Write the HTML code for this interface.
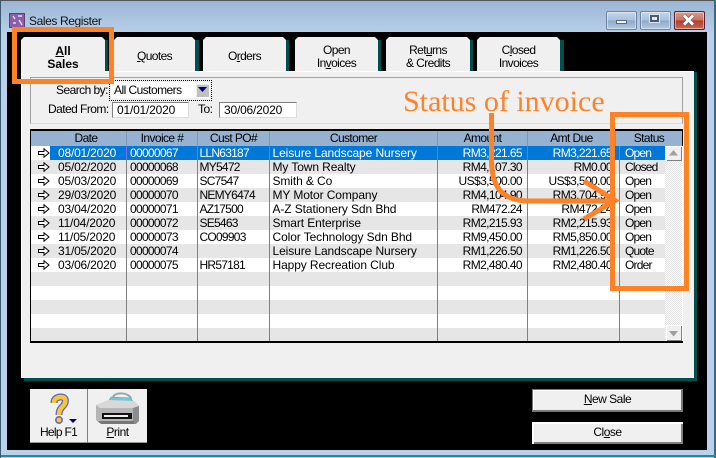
<!DOCTYPE html>
<html><head><meta charset="utf-8"><style>
html,body{margin:0;padding:0;background:#fff}
#w{position:relative;width:716px;height:458px;overflow:hidden;background:#b9d1ea;font-family:"Liberation Sans",sans-serif;font-size:12px;color:#000}
#w div,#w span.a,#w svg{position:absolute}
.t{white-space:nowrap;line-height:13px;letter-spacing:-.55px}
.tab{background:#f0f0f0;top:37px;height:34px;clip-path:polygon(3px 0,calc(100% - 3px) 0,100% 3px,100% 100%,0 100%,0 3px);text-align:center;line-height:13px;font-size:12px;letter-spacing:-.6px}
.ts{top:40px;height:31px;width:3px;background:#004f4f}
.tab p{margin:0;padding-top:7px}
.r{left:31px;width:635px;height:14px;line-height:14px;white-space:nowrap}
.r span{position:absolute;top:0}
.d{left:27px;letter-spacing:-.2px}.i{left:99px;letter-spacing:-.7px}.p{left:168.5px;letter-spacing:-.75px}.c{left:241.5px;letter-spacing:-.1px}
.m{right:144px;letter-spacing:-.6px}.u{right:54px;letter-spacing:-.6px}.s{left:594px;letter-spacing:-.8px}
.ar{left:7px;width:12px;height:10px;top:2px}
.g{background:#e6e6e6}
.v{width:1px;background:#808080;top:146px;height:195px}
.h{top:131px;height:14px;line-height:14px;text-align:center;letter-spacing:-.6px}
.btn{background:#f0f0f0;box-shadow:inset 2px 2px 0 #fff,inset -2px -2px 0 #808080;text-align:center;line-height:21px;font-size:12px;letter-spacing:-.5px}
.win{top:11px;height:17px;border:1px solid #6f83a0;border-radius:2px;background:linear-gradient(#c3d6ea 0,#a9c1dc 48%,#8ea9c9 52%,#b2c9e2 100%);box-shadow:inset 0 0 0 1px rgba(255,255,255,.45)}
.inp{background:#fff;border-top:1px solid #808080;border-left:1px solid #808080;border-right:1px solid #ddd;border-bottom:1px solid #ddd;line-height:14px;height:14px;letter-spacing:-.2px;padding-left:4px;box-sizing:content-box}
.or{border:5px solid #ff8227;box-sizing:border-box}
</style></head><body><div id="w">
<div style="left:0;top:0;width:716px;height:34px;background:linear-gradient(#9ab5d3,#b8d0ea)"></div>
<div style="left:0;top:0;width:716px;height:1px;background:#555"></div>
<div style="left:714px;top:0;width:2px;height:458px;background:#3a6a80"></div>
<div style="left:0;top:455px;width:716px;height:2px;background:#1f8a99"></div>
<div style="left:0;top:0;width:1px;height:458px;background:#3a5a70"></div>

<svg style="left:9px;top:13px" width="16" height="15" viewBox="0 0 16 15"><rect x=".5" y=".5" width="15" height="14" fill="#8a5fa8" stroke="#5d4070"/><path d="M4 3l2 3M9 3h4M4 10h3M10 7l3 5" stroke="#e8d8f0" stroke-width="1.4" fill="none"/></svg>
<div class="t" style="left:29px;top:14.500px;color:#111;letter-spacing:-.4px">Sales Register</div>

<div class="win" style="left:606px;width:29px"></div>
<div style="left:616px;top:20px;width:9px;height:2px;background:#eef2f7;border:1px solid #5a6a80"></div>
<div class="win" style="left:640px;width:29px"></div>
<div style="left:650px;top:15px;width:5px;height:3px;border:2px solid #4a5a70;background:#dfe8f2;outline:1px solid #dde6f0"></div>
<div class="win" style="left:674px;width:29px;border-color:#5a2030;background:linear-gradient(#dd9c8f 0,#c9705f 48%,#b43a28 52%,#c96a55 100%)"></div>
<svg style="left:681px;top:14px" width="16" height="12" viewBox="0 0 16 12"><path d="M3 1.500l9 9M12 1.500l-9 9" stroke="#666" stroke-width="4.400"/><path d="M3 1.500l9 9M12 1.500l-9 9" stroke="#fff" stroke-width="2.800"/></svg>

<div style="left:7px;top:32px;width:700px;height:418px;background:#000"></div>

<div class="ts" style="left:105px"></div><div class="ts" style="left:195px;width:4px"></div><div class="ts" style="left:286px"></div><div class="ts" style="left:378px"></div><div class="ts" style="left:470px"></div><div class="ts" style="left:560px;width:4px"></div>
<div class="tab" style="left:21px;width:84px;height:40px;font-weight:bold;letter-spacing:0"><p style="padding-top:8px"><u>A</u>ll<br>Sales</p></div>
<div class="tab" style="left:114px;width:81px"><p style="padding-top:13px"><u>Q</u>uotes</p></div>
<div class="tab" style="left:203px;width:83px"><p style="padding-top:13px">O<u>r</u>ders</p></div>
<div class="tab" style="left:295px;width:83px"><p>Open<br>In<u>v</u>oices</p></div>
<div class="tab" style="left:386px;width:84px"><p>Ret<u>u</u>rns<br>&amp; Credits</p></div>
<div class="tab" style="left:477px;width:83px"><p>C<u>l</u>osed<br>Invoices</p></div>

<div style="left:21px;top:71px;width:673px;height:307px;background:#f0f0f0;border-left:1px solid #fff;border-top:1px solid #fff;box-sizing:border-box"></div>
<div style="left:21px;top:71px;width:84px;height:6px;background:#f0f0f0"></div>
<div style="left:694px;top:72px;width:3px;height:309px;background:#004f4f"></div>
<div style="left:24px;top:378px;width:673px;height:3px;background:#004f4f"></div>

<div style="left:30px;top:77px;width:653px;height:47px;border:1px solid #a0a0a0;border-bottom:1px solid #ddd;box-sizing:border-box"></div>

<div class="t" style="left:56px;top:84px">Search by:</div>
<div style="left:109px;top:80px;width:103px;height:21px;border:1px dotted #000;box-sizing:border-box"></div>
<div style="left:111px;top:82px;width:99px;height:16px;background:#fff"></div>
<div class="t" style="left:114px;top:84px">All Customers</div>
<div style="left:196px;top:84px;width:13px;height:13px;background:#c0c0c0;border-top:1px solid #eee;border-left:1px solid #eee;box-sizing:border-box"></div>
<svg style="left:198px;top:87px" width="10" height="6"><path d="M0 0h9l-4.500 5z" fill="#000080"/></svg>
<div class="t" style="left:48px;top:103px">Dated From:</div>
<div class="inp t" style="left:112px;top:102px;width:71px">01/01/2020</div>
<div class="t" style="left:198px;top:103px">To:</div>
<div class="inp t" style="left:219px;top:102px;width:72px">30/06/2020</div>

<div style="left:30px;top:129px;width:653px;height:214px;background:#fff"></div>
<div class="g" style="left:31px;top:160px;width:635px;height:14px"></div>
<div class="g" style="left:31px;top:188px;width:635px;height:14px"></div>
<div class="g" style="left:31px;top:216px;width:635px;height:14px"></div>
<div class="g" style="left:31px;top:244px;width:635px;height:14px"></div>
<div class="g" style="left:31px;top:272px;width:635px;height:14px"></div>
<div class="g" style="left:31px;top:300px;width:635px;height:14px"></div>
<div class="g" style="left:31px;top:328px;width:635px;height:13px"></div>
<div style="left:50px;top:146px;width:615px;height:14px;background:#0078d7"></div>

<div class="v" style="left:126px"></div><div class="v" style="left:197px"></div><div class="v" style="left:269px"></div><div class="v" style="left:437px"></div><div class="v" style="left:527px"></div><div class="v" style="left:619px"></div>
<div style="left:126px;top:146px;width:1px;height:14px;background:#7a6cf0"></div><div style="left:197px;top:146px;width:1px;height:14px;background:#7a6cf0"></div><div style="left:269px;top:146px;width:1px;height:14px;background:#7a6cf0"></div><div style="left:437px;top:146px;width:1px;height:14px;background:#7a6cf0"></div><div style="left:527px;top:146px;width:1px;height:14px;background:#7a6cf0"></div><div style="left:619px;top:146px;width:1px;height:14px;background:#7a6cf0"></div>

<div style="left:31px;top:130px;width:651px;height:16px;background:#97b1d0"></div>
<div style="left:126px;top:130px;width:1px;height:16px;background:#7f97b6"></div><div style="left:197px;top:130px;width:1px;height:16px;background:#7f97b6"></div><div style="left:269px;top:130px;width:1px;height:16px;background:#7f97b6"></div><div style="left:437px;top:130px;width:1px;height:16px;background:#7f97b6"></div><div style="left:527px;top:130px;width:1px;height:16px;background:#7f97b6"></div><div style="left:615px;top:130px;width:1px;height:16px;background:#7f97b6"></div>
<div class="h" style="left:50px;width:72px">Date</div>
<div class="h" style="left:127px;width:70px">Invoice #</div>
<div class="h" style="left:198px;width:71px">Cust PO#</div>
<div class="h" style="left:270px;width:167px">Customer</div>
<div class="h" style="left:438px;width:89px">Amount</div>
<div class="h" style="left:528px;width:87px">Amt Due</div>
<div class="h" style="left:616px;width:66px">Status</div>

<div class="r" style="top:146px;color:#fff"><svg class="ar" viewBox="0 0 12 10"><path d="M.5 3.500h5.500V.8L11 5 6 9.200V6.500H.5z" fill="#fff" stroke="#000"/></svg><span class="d">08/01/2020</span><span class="i">00000067</span><span class="p">LLN63187</span><span class="c">Leisure Landscape Nursery</span><span class="m">RM3,221.65</span><span class="u">RM3,221.65</span><span class="s">Open</span></div>
<div class="r" style="top:160px"><svg class="ar" viewBox="0 0 12 10"><path d="M.5 3.500h5.500V.8L11 5 6 9.200V6.500H.5z" fill="#fff" stroke="#000"/></svg><span class="d">05/02/2020</span><span class="i">00000068</span><span class="p">MY5472</span><span class="c">My Town Realty</span><span class="m">RM4,107.30</span><span class="u">RM0.00</span><span class="s">Closed</span></div>
<div class="r" style="top:174px"><svg class="ar" viewBox="0 0 12 10"><path d="M.5 3.500h5.500V.8L11 5 6 9.200V6.500H.5z" fill="#fff" stroke="#000"/></svg><span class="d">05/03/2020</span><span class="i">00000069</span><span class="p">SC7547</span><span class="c">Smith &amp; Co</span><span class="m">US$3,500.00</span><span class="u">US$3,500.00</span><span class="s">Open</span></div>
<div class="r" style="top:188px"><svg class="ar" viewBox="0 0 12 10"><path d="M.5 3.500h5.500V.8L11 5 6 9.200V6.500H.5z" fill="#fff" stroke="#000"/></svg><span class="d">29/03/2020</span><span class="i">00000070</span><span class="p">NEMY6474</span><span class="c">MY Motor Company</span><span class="m">RM4,104.90</span><span class="u">RM3,704.90</span><span class="s">Open</span></div>
<div class="r" style="top:202px"><svg class="ar" viewBox="0 0 12 10"><path d="M.5 3.500h5.500V.8L11 5 6 9.200V6.500H.5z" fill="#fff" stroke="#000"/></svg><span class="d">03/04/2020</span><span class="i">00000071</span><span class="p">AZ17500</span><span class="c">A-Z Stationery Sdn Bhd</span><span class="m">RM472.24</span><span class="u">RM472.24</span><span class="s">Open</span></div>
<div class="r" style="top:216px"><svg class="ar" viewBox="0 0 12 10"><path d="M.5 3.500h5.500V.8L11 5 6 9.200V6.500H.5z" fill="#fff" stroke="#000"/></svg><span class="d">11/04/2020</span><span class="i">00000072</span><span class="p">SE5463</span><span class="c">Smart Enterprise</span><span class="m">RM2,215.93</span><span class="u">RM2,215.93</span><span class="s">Open</span></div>
<div class="r" style="top:230px"><svg class="ar" viewBox="0 0 12 10"><path d="M.5 3.500h5.500V.8L11 5 6 9.200V6.500H.5z" fill="#fff" stroke="#000"/></svg><span class="d">11/05/2020</span><span class="i">00000073</span><span class="p">CO09903</span><span class="c">Color Technology Sdn Bhd</span><span class="m">RM9,450.00</span><span class="u">RM5,850.00</span><span class="s">Open</span></div>
<div class="r" style="top:244px"><svg class="ar" viewBox="0 0 12 10"><path d="M.5 3.500h5.500V.8L11 5 6 9.200V6.500H.5z" fill="#fff" stroke="#000"/></svg><span class="d">31/05/2020</span><span class="i">00000074</span><span class="c">Leisure Landscape Nursery</span><span class="m">RM1,226.50</span><span class="u">RM1,226.50</span><span class="s">Quote</span></div>
<div class="r" style="top:258px"><svg class="ar" viewBox="0 0 12 10"><path d="M.5 3.500h5.500V.8L11 5 6 9.200V6.500H.5z" fill="#fff" stroke="#000"/></svg><span class="d">03/06/2020</span><span class="i">00000075</span><span class="p">HR57181</span><span class="c">Happy Recreation Club</span><span class="m">RM2,480.40</span><span class="u">RM2,480.40</span><span class="s">Order</span></div>

<div style="left:665px;top:146px;width:17px;height:195px;background-color:#f4f4f4;background-image:repeating-conic-gradient(#e4e4e4 0 25%,#fbfbfb 0 50%);background-size:2px 2px"></div>
<div style="left:666px;top:146px;width:16px;height:15px;background:#f0f0f0;box-shadow:inset 1px 1px 0 #fff,inset -1px -1px 0 #808080"></div>
<svg style="left:669px;top:150px" width="10" height="6"><path d="M0 5.500h9L4.500 0z" fill="#a0a0a0"/></svg>
<div style="left:666px;top:325px;width:16px;height:16px;background:#f0f0f0;box-shadow:inset 1px 1px 0 #fff,inset -1px -1px 0 #808080"></div>
<svg style="left:669px;top:331px" width="10" height="6"><path d="M0 0h9L4.500 5.500z" fill="#a0a0a0"/></svg>

<div style="left:30px;top:129px;width:653px;height:1.500px;background:#000"></div>
<div style="left:30px;top:129px;width:1px;height:214px;background:#000"></div>
<div style="left:682px;top:129px;width:1px;height:17px;background:#000"></div>
<div style="left:30px;top:341px;width:653px;height:2px;background:#000"></div>

<div style="left:30px;top:389px;width:57px;height:54px;background:#f0f0f0;box-shadow:inset 0 -1px 0 #999"></div>
<div style="left:87px;top:389px;width:1px;height:54px;background:#808080"></div>
<div style="left:88px;top:389px;width:59px;height:54px;background:#f0f0f0;box-shadow:inset 0 -1px 0 #999"></div>
<svg style="left:48px;top:391px" width="36" height="34" viewBox="0 0 36 34">
<path d="M6 12C6 7 10 6 13 6C19 6 18 12 15 15C12 18 11 20 11 24" fill="none" stroke="#5a65c0" stroke-width="7"/>
<path d="M6 12C6 7 10 6 13 6C19 6 18 12 15 15C12 18 11 20 11 24" fill="none" stroke="#f8c832" stroke-width="4.500"/>
<circle cx="11" cy="29" r="3.200" fill="#f8c832" stroke="#5a65c0" stroke-width="1.500"/>
<path d="M21 28h8l-4 4z" fill="#000080"/>
</svg>
<svg style="left:95px;top:392px" width="46" height="34" viewBox="0 0 46 34">
<path d="M18 5C20 0 32 0 36 6" fill="none" stroke="#9aa" stroke-width="2"/>
<path d="M16 5l20 1 3 5H12z" fill="#6fc8d8" stroke="#888" stroke-width=".5"/>
<path d="M1 13l13-5 25 1 5 5v15l-3 2H4l-3-3z" fill="#b5b5b5"/>
<path d="M1 13l13-5 25 1 5 5-6 2H5z" fill="#d8d8d8"/>
<path d="M38 16l6-2v15l-3 3h-3z" fill="#8c8c8c"/>
<rect x="7" y="21" width="30" height="6" fill="#111"/><rect x="9" y="23" width="24" height="2" fill="#eee"/>
<path d="M3 29h36v3H6z" fill="#777"/>
</svg>
<div class="t" style="left:30px;top:426px;width:57px;text-align:center;letter-spacing:-.7px">Help F1</div>
<div class="t" style="left:88px;top:426px;width:59px;text-align:center;letter-spacing:-.5px"><u>P</u>rint</div>

<div class="btn" style="left:532px;top:389px;width:151px;height:23px;box-shadow:inset 0 0 0 1px #777,inset -2px -2px 0 #777,inset 2px 2px 0 #fff"><u>N</u>ew Sale</div>
<div class="btn" style="left:532px;top:422px;width:151px;height:22px">Cl<u>o</u>se</div>

<div class="or" style="left:12px;top:27px;width:102px;height:57px"></div>
<div class="or" style="left:610px;top:112px;width:79px;height:179px"></div>
<svg style="left:0;top:0" width="716" height="458" viewBox="0 0 716 458">
<path d="M491.500 113V160C491.500 188 503 201 530 201H615M584 181L615 200.500L584 219" fill="none" stroke="#ff8227" stroke-width="5"/>
<text x="403" y="111" font-family="Liberation Serif" font-size="30" fill="#ff8227">Status of invoice</text>
</svg>
</div></body></html>
